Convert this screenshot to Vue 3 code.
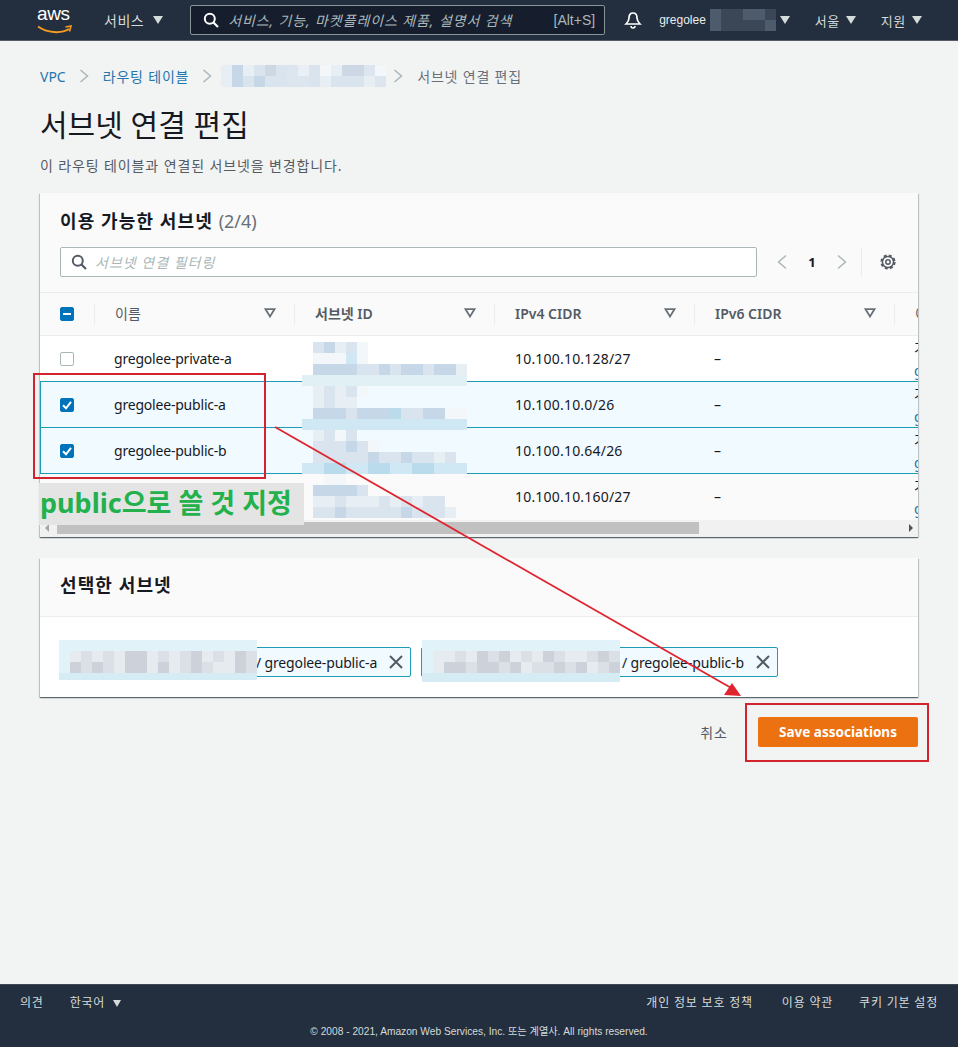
<template>
  <div class="console">
    <header class="topbar">
      <div class="aws-logo">
        <span class="aws-word">aws</span>
        <svg class="aws-smile" width="36" height="10" viewBox="0 0 36 10">
          <path d="M1 1.500C10 8 24 9 32 4" fill="none" stroke="#f49b23" stroke-width="2" />
          <path d="M28.500 2 L34 1 L32.500 6.500" fill="none" stroke="#f49b23" stroke-width="1.600" />
        </svg>
      </div>
      <div class="nav-item services">서비스 <span class="caret"></span></div>
      <div class="search">
        <svg class="search-icon" width="16" height="16" viewBox="0 0 16 16">
          <circle cx="6.800" cy="6.800" r="5" fill="none" stroke="#fff" stroke-width="2" />
          <path d="M10.500 10.500L15 15" stroke="#fff" stroke-width="2.200" />
        </svg>
        <span class="search-text">서비스, 기능, 마켓플레이스 제품, 설명서 검색</span>
        <span class="search-key">[Alt+S]</span>
      </div>
      <svg class="bell" width="18" height="18" viewBox="0 0 18 18">
        <path
          d="M9 2C6 2 5 4.500 5 7C5 10 3.500 11.500 2 13H16C14.500 11.500 13 10 13 7C13 4.500 12 2 9 2Z"
          fill="none"
          stroke="#fff"
          stroke-width="1.700"
        />
        <path d="M7 15a2 2 0 0 0 4 0" fill="none" stroke="#fff" stroke-width="1.500" />
      </svg>
      <div class="user">gregolee</div>
      <div class="mosaic user-mosaic">
        <i v-for="(c, i) in cells(userMosaic)" :key="i" :style="{ background: c }"></i>
      </div>
      <span class="caret user-caret"></span>
      <div class="nav-item region">서울 <span class="caret"></span></div>
      <div class="nav-item support">지원 <span class="caret"></span></div>
    </header>

    <main class="page">
      <nav class="breadcrumb">
        <a>VPC</a>
        <svg class="crumb-sep" width="10" height="14" viewBox="0 0 10 14">
          <path d="M1.500 1L8.500 7L1.500 13" fill="none" stroke="#aab7b8" stroke-width="1.500" />
        </svg>
        <a class="spaced">라우팅 테이블</a>
        <svg class="crumb-sep" width="10" height="14" viewBox="0 0 10 14">
          <path d="M1.500 1L8.500 7L1.500 13" fill="none" stroke="#aab7b8" stroke-width="1.500" />
        </svg>
        <div class="mosaic crumb-mosaic">
          <i v-for="(c, i) in cells(crumbMosaic)" :key="i" :style="{ background: c }"></i>
        </div>
        <svg class="crumb-sep" width="10" height="14" viewBox="0 0 10 14">
          <path d="M1.500 1L8.500 7L1.500 13" fill="none" stroke="#aab7b8" stroke-width="1.500" />
        </svg>
        <span class="crumb-current spaced">서브넷 연결 편집</span>
      </nav>

      <h1>서브넷 연결 편집</h1>
      <p class="subtitle">이 라우팅 테이블과 연결된 서브넷을 변경합니다.</p>

      <section class="card">
        <div class="card-head subnets-head">
          <h2>이용 가능한 서브넷 <span class="count">(2/4)</span></h2>
          <div class="tools">
            <div class="filter">
              <svg width="16" height="16" viewBox="0 0 16 16">
                <circle cx="6.800" cy="6.800" r="5" fill="none" stroke="#545b64" stroke-width="2" />
                <path d="M10.500 10.500L15 15" stroke="#545b64" stroke-width="2.200" />
              </svg>
              <span>서브넷 연결 필터링</span>
            </div>
            <div class="pager">
              <svg width="12" height="16" viewBox="0 0 12 16">
                <path d="M10 1.500L2.500 8L10 14.500" fill="none" stroke="#aab7b8" stroke-width="1.500" />
              </svg>
              <b>1</b>
              <svg width="12" height="16" viewBox="0 0 12 16">
                <path d="M2 1.500L9.500 8L2 14.500" fill="none" stroke="#aab7b8" stroke-width="1.500" />
              </svg>
            </div>
            <div class="settings">
              <svg width="18" height="18" viewBox="0 0 18 18">
                <circle cx="9" cy="9" r="6.300" fill="none" stroke="#545b64" stroke-width="2.600" stroke-dasharray="2.800 2.150" />
                <circle cx="9" cy="9" r="5.600" fill="none" stroke="#545b64" stroke-width="1.500" />
                <circle cx="9" cy="9" r="2.200" fill="none" stroke="#545b64" stroke-width="1.500" />
              </svg>
            </div>
          </div>
        </div>

        <div class="table">
          <div class="row head">
            <div class="cell check">
              <span class="checkbox mixed"><i></i></span>
            </div>
            <div v-for="(col, i) in columns" :key="col" class="cell" :class="{ thin: i === 0 }">
              <span class="col-label">{{ col }}</span>
              <svg class="sort" width="12" height="10" viewBox="0 0 12 10">
                <path d="M1.500 1.200H10.500L6 8.500Z" fill="none" stroke="#687078" stroke-width="1.800" />
              </svg>
            </div>
            <div class="cell last-head">이름</div>
          </div>
          <div
            v-for="s in subnets"
            :key="s.cidr"
            class="row body"
            :class="{ selected: s.selected, tail: s.tail, above: s.above }"
          >
            <div class="cell check">
              <span class="checkbox" :class="{ on: s.selected }">
                <svg v-if="s.selected" width="14" height="14" viewBox="0 0 14 14">
                  <path d="M3 7.300L6 10.300L11 3.800" fill="none" stroke="#fff" stroke-width="2" />
                </svg>
              </span>
            </div>
            <div class="cell name">{{ s.name }}</div>
            <div class="cell"></div>
            <div class="cell cidr">{{ s.cidr }}</div>
            <div class="cell">–</div>
            <div class="cell route">
              <span>기본</span>
              <a>gregolee</a>
            </div>
          </div>
        </div>

        <div class="scrollbar">
          <span class="arrow left"></span>
          <div class="thumb"></div>
          <span class="arrow right"></span>
        </div>
      </section>

      <section class="card selected-card">
        <div class="card-head">
          <h2>선택한 서브넷</h2>
        </div>
        <div class="tokens">
          <div v-for="t in tokens" :key="t.name" class="token" :class="t.cls">
            <span>/ {{ t.name }}</span>
            <svg width="16" height="16" viewBox="0 0 16 16">
              <path d="M2 2L14 14M14 2L2 14" stroke="#545b64" stroke-width="2" />
            </svg>
          </div>
        </div>
      </section>

      <div class="actions">
        <a class="cancel">취소</a>
        <button class="save">Save associations</button>
      </div>
    </main>

    <footer class="footer">
      <div class="footer-links">
        <span class="feedback">의견</span>
        <span class="lang">한국어 <span class="caret small"></span></span>
        <span class="spacer"></span>
        <span class="privacy">개인 정보 보호 정책</span>
        <span>이용 약관</span>
        <span>쿠키 기본 설정</span>
      </div>
      <div class="copyright">© 2008 - 2021, Amazon Web Services, Inc. 또는 계열사. All rights reserved.</div>
    </footer>

    <!-- masked ids and the annotations lie over the screenshot -->
    <div class="mosaic id-mosaic">
      <i v-for="(c, i) in cells(idMosaic)" :key="i" :style="{ background: c }"></i>
    </div>
    <div class="mosaic token-mosaic first">
      <i v-for="(c, i) in cells(tokenMosaicA)" :key="i" :style="{ background: c }"></i>
    </div>
    <div class="mosaic token-mosaic second">
      <i v-for="(c, i) in cells(tokenMosaicB)" :key="i" :style="{ background: c }"></i>
    </div>

    <div class="note">public으로 쓸 것 지정</div>
    <div class="red-box rows-box"></div>
    <div class="red-box save-box"></div>
    <svg class="arrow-layer" width="958" height="1047" viewBox="0 0 958 1047">
      <path d="M275 427L733 689" stroke="#e0242e" stroke-width="1.800" fill="none" />
      <path d="M724 695L732 683L741 696Z" fill="#e0242e" />
    </svg>
  </div>
</template>

<script setup>
const columns = ["이름", "서브넷 ID", "IPv4 CIDR", "IPv6 CIDR"];

const subnets = [
  { name: "gregolee-private-a", cidr: "10.100.10.128/27", selected: false, above: true },
  { name: "gregolee-public-a", cidr: "10.100.10.0/26", selected: true },
  { name: "gregolee-public-b", cidr: "10.100.10.64/26", selected: true },
  // the note covers this row's name
  { name: "", cidr: "10.100.10.160/27", selected: false, tail: true },
];

const tokens = [
  { name: "gregolee-public-a", cls: "token-a" },
  { name: "gregolee-public-b", cls: "token-b" },
];

const shades = {
  ".": "transparent",
  a: "#c6d7e7",
  b: "#d9e4ee",
  c: "#e7eff5",
  d: "#f4f7fa",
  e: "#e0f0f5",
  f: "#cfe8f3",
  g: "#b9dbec",
  h: "#cdd8e4",
  i: "#dde6ef",
  j: "#eaeff5",
  k: "#4d5b6c",
  l: "#3b4757",
  m: "#e1f2f8",
  n: "#d5ecf5",
  o: "#cdd1d9",
  p: "#dae0e6",
  q: "#e6ebef",
};

const idMosaic = [
  ".bacbd.........",
  ".dddfd.........",
  ".aaaabbabaabaac",
  "eeeeeeeeeeeeeee",
  ".cbcbd.........",
  ".cbcc..........",
  ".aaabaaagbbaadd",
  "fffffffffffffff",
  ".cbdb..........",
  ".bbbabd........",
  ".bbbbbabbabbcb.",
  "ffggffggffggfff",
  "..dd...........",
  ".aaaab.........",
  ".ccbcccbcbcbb..",
  ".bbabbbbbabbbc.",
];

const crumbMosaic = ["cacbhbijbdchhid", "cababbiibcbbbci"];
const userMosaic = ["kllkkl", "kllllk"];

const tokenMosaicA = [
  "mmmmmmmmmmmmmmmmmm",
  "mqpqpqooqpqpoqpqop",
  "mopopqooqoqpopqqop",
  "nnnnnnnnnnnnnnnnnn",
];
const tokenMosaicB = [
  "mmmmmmmmmmmmmmmmmm",
  "mqqpqopoqpqopqqpop",
  "mqoopoopoqppopoqpo",
  "nnnnnnnnnnnnnnnnnn",
];

const cells = (rows) => rows.join("").split("").map((c) => shades[c]);
</script>

<style>
html,
body {
  margin: 0;
  background: #f2f3f3;
}
</style>

<style scoped>
.console {
  position: relative;
  display: flex;
  flex-direction: column;
  min-height: 1047px;
  overflow: hidden;
  background: #f2f3f3;
  font-family: "Noto Sans", "Noto Sans CJK KR", sans-serif;
  font-size: 14px;
  color: #16191f;
}

.topbar {
  display: flex;
  align-items: center;
  height: 40px;
  flex-shrink: 0;
  padding-left: 37px;
  background: #232f3e;
  border-bottom: 1px solid #545b64;
  color: #d5dbdb;
}

.aws-logo {
  position: relative;
  width: 36px;
  height: 32px;
}

.aws-word {
  display: block;
  font-family: "Liberation Sans", sans-serif;
  font-size: 19px;
  line-height: 24px;
  letter-spacing: -0.4px;
  color: #fff;
  margin-top: -2px;
}

.aws-smile {
  position: absolute;
  left: 0;
  top: 21px;
}

.nav-item {
  white-space: nowrap;
  font-size: 13px;
  letter-spacing: 0.5px;
  display: flex;
  align-items: center;
  gap: 6px;
}

.services {
  margin-left: 31px;
  font-size: 14px;
  gap: 9px;
}

.caret {
  display: inline-block;
  width: 0;
  height: 0;
  border-left: 5px solid transparent;
  border-right: 5px solid transparent;
  border-top: 8px solid #d5dbdb;
}

.caret.small {
  border-left-width: 4px;
  border-right-width: 4px;
  border-top-width: 7px;
  margin-left: 4px;
}

.search {
  display: flex;
  align-items: center;
  width: 415px;
  height: 30px;
  box-sizing: border-box;
  margin-left: 27px;
  padding: 0 9px 0 12px;
  background: #161e2d;
  border: 1px solid #879596;
  border-radius: 2px;
}

.search-text {
  margin-left: 9px;
  flex: 1;
  font-style: italic;
  font-size: 14px;
  letter-spacing: 0.9px;
  color: #aab7b8;
  white-space: nowrap;
}

.search-key {
  font-family: "Liberation Sans", sans-serif;
  font-size: 14px;
  color: #aab7b8;
}

.bell {
  margin-left: 19px;
}

.user {
  margin-left: 17px;
  font-family: "Liberation Sans", sans-serif;
  font-size: 12px;
  color: #eaeded;
}

.mosaic {
  display: grid;
}

.mosaic i {
  display: block;
}

.user-mosaic {
  margin-left: 4px;
  grid-template-columns: repeat(6, 11px);
  grid-auto-rows: 11px;
}

.user-caret {
  margin-left: 4px;
}

.region {
  margin-left: 25px;
}

.support {
  margin-left: 25px;
}

.page {
  flex: 1;
  padding: 24px 40px 0;
}

.breadcrumb {
  display: flex;
  align-items: center;
  height: 22px;
  font-size: 14px;
  white-space: nowrap;
}

.breadcrumb a {
  color: #2277ad;
}

.spaced {
  letter-spacing: 0.8px;
}

.crumb-sep {
  margin: 0 14px 0 13px;
}

.crumb-mosaic {
  margin-left: -5px;
  grid-template-columns: repeat(15, 11px);
  grid-auto-rows: 11px;
}

.crumb-mosaic + .crumb-sep {
  margin-left: 7px;
}

.crumb-current {
  color: #687078;
}

h1 {
  margin: 18px 0 0;
  font-size: 30px;
  line-height: 40px;
  font-weight: 400;
  color: #16191f;
}

.subtitle {
  margin: 10px 0 0;
  font-size: 14px;
  line-height: 22px;
  letter-spacing: 0.88px;
  color: #545b64;
}

.card {
  margin-top: 16px;
  background: #fff;
  box-shadow: 0 1px 1px 0 rgba(0, 28, 36, 0.5), 1px 1px 1px 0 rgba(0, 28, 36, 0.15),
    -1px 1px 1px 0 rgba(0, 28, 36, 0.15);
}

.card-head {
  padding: 14px 20px 18px;
  background: #fafafa;
  border-bottom: 1px solid #eaeded;
}

.subnets-head {
  padding: 15px 20px 16px;
  height: 68px;
}

h2 {
  margin: 0;
  font-size: 18px;
  line-height: 26px;
  letter-spacing: 1.100px;
  font-weight: 700;
  color: #16191f;
}

.count {
  font-weight: 400;
  letter-spacing: 0;
  color: #687078;
}

.tools {
  display: flex;
  align-items: center;
  margin-top: 13px;
}

.filter {
  display: flex;
  align-items: center;
  gap: 8px;
  width: 697px;
  height: 30px;
  box-sizing: border-box;
  padding-left: 10px;
  background: #fff;
  border: 1px solid #aab7b8;
  border-radius: 2px;
  font-style: italic;
  letter-spacing: 1px;
  color: #aab7b8;
}

.pager {
  display: flex;
  align-items: center;
  width: 105px;
  height: 30px;
  box-sizing: border-box;
  padding-left: 19px;
  border-right: 1px solid #eaeded;
}

.pager b {
  width: 48px;
  text-align: center;
  font-size: 13px;
  color: #16191f;
}

.settings {
  display: flex;
  margin-left: 17px;
}

.table {
  overflow: hidden;
}

.row {
  display: grid;
  grid-template-columns: 55px repeat(5, 200px);
  width: 1055px;
  box-sizing: border-box;
}

.row.head {
  height: 43px;
  background: #fafafa;
  border-bottom: 1px solid #eaeded;
  font-weight: 600;
  color: #545b64;
}

.row.head .cell {
  justify-content: space-between;
  padding: 0 19px 2px 20px;
  position: relative;
}

.row.head .cell::after {
  content: "";
  position: absolute;
  right: 0;
  top: 11px;
  bottom: 10px;
  width: 1px;
  background: #eaeded;
}

.row.head .thin {
  font-weight: 400;
}

.row.head .last-head {
  font-weight: 400;
}

.row.head .cell.check {
  padding: 0 0 0 20px;
}

.cell {
  display: flex;
  align-items: center;
  padding-left: 19px;
  white-space: nowrap;
  overflow: hidden;
  min-width: 0;
}

.name {
  letter-spacing: -0.2px;
}

.cidr {
  padding-left: 20px;
  letter-spacing: 0.2px;
}

.row.body {
  height: 46px;
  border-bottom: 1px solid transparent;
  color: #16191f;
}

.row.body .cell.check {
  padding-left: 20px;
}

.row.selected {
  background: #f1faff;
  border-bottom-color: #1c9cb5;
  box-shadow: inset 1px 0 0 #1c9cb5;
}

.row.above {
  border-bottom-color: #1c9cb5;
}

.row.tail {
  background: #fafafa;
}

.route {
  flex-direction: column;
  align-items: flex-start;
  justify-content: center;
  line-height: 23px;
}

.route a {
  color: #2277ad;
}

.checkbox {
  display: block;
  width: 14px;
  height: 14px;
  box-sizing: border-box;
  border: 1px solid #aab7b8;
  border-radius: 2px;
  background: #fff;
}

.checkbox svg {
  display: block;
  margin: -1px;
}

.checkbox.on,
.checkbox.mixed {
  background: #0073bb;
  border-color: #0073bb;
}

.checkbox.mixed {
  display: flex;
  align-items: center;
  justify-content: center;
}

.checkbox.mixed i {
  width: 8px;
  height: 2px;
  background: #fff;
}

.scrollbar {
  position: relative;
  height: 17px;
  background: #f1f1f1;
}

.thumb {
  position: absolute;
  left: 17px;
  top: 2px;
  width: 642px;
  height: 12px;
  background: #c1c1c1;
}

.arrow {
  position: absolute;
  top: 4px;
  width: 0;
  height: 0;
  border-top: 4px solid transparent;
  border-bottom: 4px solid transparent;
}

.arrow.left {
  left: 5px;
  border-right: 4px solid #a3a3a3;
}

.arrow.right {
  right: 5px;
  border-left: 4px solid #505050;
}

.selected-card {
  margin-top: 21px;
}

.tokens {
  display: flex;
  gap: 10px;
  padding: 30px 20px 20px;
}

.token {
  display: flex;
  align-items: center;
  justify-content: space-between;
  height: 30px;
  box-sizing: border-box;
  padding-right: 6px;
  background: #f1faff;
  border: 1px solid #1c9cb5;
  border-radius: 2px;
  letter-spacing: -0.15px;
}

.token-a {
  width: 351px;
  padding-left: 195px;
}

.token-b {
  width: 357px;
  padding-left: 200px;
}

.actions {
  display: flex;
  justify-content: flex-end;
  align-items: center;
  gap: 30px;
  margin-top: 20px;
}

.cancel {
  letter-spacing: 1px;
  color: #545b64;
}

.save {
  width: 160px;
  height: 30px;
  padding: 0;
  border: none;
  border-radius: 2px;
  background: #ec7211;
  color: #fff;
  font-family: inherit;
  font-size: 13.500px;
  font-weight: 700;
}

.footer {
  height: 63px;
  flex-shrink: 0;
  box-sizing: border-box;
  background: #232f3e;
  border-top: 1px solid #414750;
  color: #d5dbdb;
  font-size: 12px;
}

.footer-links {
  display: flex;
  align-items: center;
  gap: 26px;
  height: 34px;
  padding: 0 20px;
  letter-spacing: 0.800px;
}

.privacy {
  margin-right: 3px;
}

.spacer {
  flex: 1;
}

.copyright {
  margin-top: 6px;
  text-align: center;
  font-family: "Liberation Sans", "Noto Sans CJK KR", sans-serif;
  font-size: 10.200px;
  line-height: 14px;
}

.id-mosaic {
  position: absolute;
  left: 302px;
  top: 342px;
  grid-template-columns: repeat(15, 11px);
  grid-auto-rows: 11px;
}

.token-mosaic {
  position: absolute;
  top: 640px;
  width: 198px;
  overflow: hidden;
  grid-template-columns: repeat(18, 11px);
  grid-auto-rows: 11px;
}

.token-mosaic.first {
  left: 59px;
  height: 40px;
}

.token-mosaic.second {
  left: 422px;
  height: 42px;
}

.note {
  position: absolute;
  left: 39px;
  top: 483px;
  width: 265px;
  height: 42px;
  padding-left: 1px;
  box-sizing: border-box;
  background: #e4e4e4;
  color: #22b14c;
  font-size: 27px;
  font-weight: 700;
  line-height: 40px;
  white-space: nowrap;
}

.red-box {
  position: absolute;
  box-sizing: border-box;
  border: 2px solid #d3232f;
}

.rows-box {
  left: 33px;
  top: 373px;
  width: 233px;
  height: 106px;
}

.save-box {
  left: 745px;
  top: 703px;
  width: 184px;
  height: 59px;
}

.arrow-layer {
  position: absolute;
  left: 0;
  top: 0;
  pointer-events: none;
}
</style>
